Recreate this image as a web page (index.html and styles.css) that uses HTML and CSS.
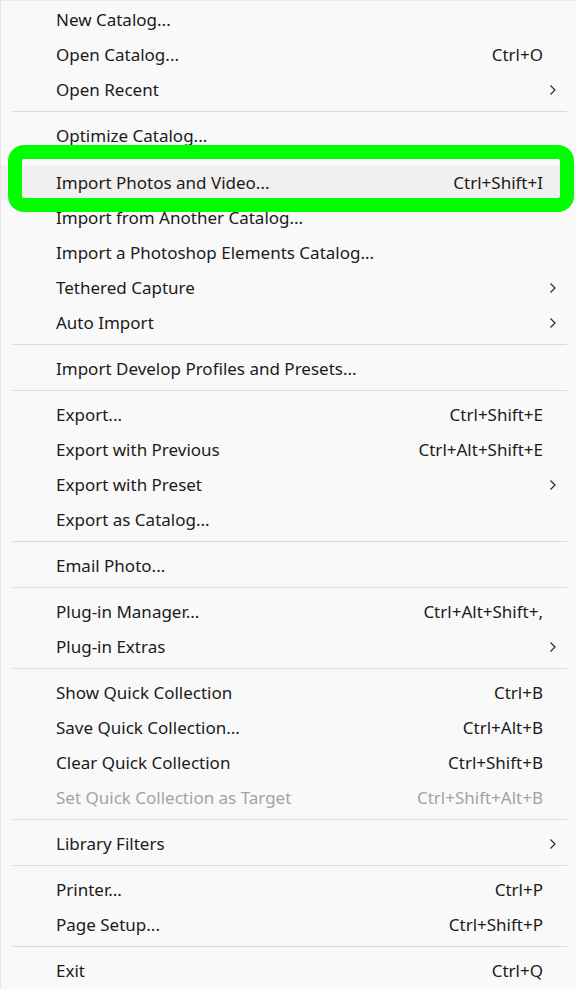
FILE: index.html
```html
<!DOCTYPE html>
<html>
<head>
<meta charset="utf-8">
<link rel="stylesheet" href="styles.css">
</head>
<body>
<div class="menu">
  <div class="item"><span class="label">New Catalog...</span></div>
  <div class="item"><span class="label">Open Catalog...</span><span class="key">Ctrl+O</span></div>
  <div class="item"><span class="label">Open Recent</span><span class="sub"><svg viewBox="0 0 8 12" width="8" height="12"><path d="M1.5 1.5 L6 6 L1.5 10.5" /></svg></span></div>
  <div class="sep"></div>
  <div class="item"><span class="label">Optimize Catalog...</span></div>
  <div class="item hot"><span class="label">Import Photos and Video...</span><span class="key">Ctrl+Shift+I</span></div>
  <div class="item"><span class="label">Import from Another Catalog...</span></div>
  <div class="item"><span class="label">Import a Photoshop Elements Catalog...</span></div>
  <div class="item"><span class="label">Tethered Capture</span><span class="sub"><svg viewBox="0 0 8 12" width="8" height="12"><path d="M1.5 1.5 L6 6 L1.5 10.5" /></svg></span></div>
  <div class="item"><span class="label">Auto Import</span><span class="sub"><svg viewBox="0 0 8 12" width="8" height="12"><path d="M1.5 1.5 L6 6 L1.5 10.5" /></svg></span></div>
  <div class="sep"></div>
  <div class="item"><span class="label">Import Develop Profiles and Presets...</span></div>
  <div class="sep"></div>
  <div class="item"><span class="label">Export...</span><span class="key">Ctrl+Shift+E</span></div>
  <div class="item"><span class="label">Export with Previous</span><span class="key">Ctrl+Alt+Shift+E</span></div>
  <div class="item"><span class="label">Export with Preset</span><span class="sub"><svg viewBox="0 0 8 12" width="8" height="12"><path d="M1.5 1.5 L6 6 L1.5 10.5" /></svg></span></div>
  <div class="item"><span class="label">Export as Catalog...</span></div>
  <div class="sep"></div>
  <div class="item"><span class="label">Email Photo...</span></div>
  <div class="sep"></div>
  <div class="item"><span class="label">Plug-in Manager...</span><span class="key">Ctrl+Alt+Shift+,</span></div>
  <div class="item"><span class="label">Plug-in Extras</span><span class="sub"><svg viewBox="0 0 8 12" width="8" height="12"><path d="M1.5 1.5 L6 6 L1.5 10.5" /></svg></span></div>
  <div class="sep"></div>
  <div class="item"><span class="label">Show Quick Collection</span><span class="key">Ctrl+B</span></div>
  <div class="item"><span class="label">Save Quick Collection...</span><span class="key">Ctrl+Alt+B</span></div>
  <div class="item"><span class="label">Clear Quick Collection</span><span class="key">Ctrl+Shift+B</span></div>
  <div class="item disabled"><span class="label">Set Quick Collection as Target</span><span class="key">Ctrl+Shift+Alt+B</span></div>
  <div class="sep"></div>
  <div class="item"><span class="label">Library Filters</span><span class="sub"><svg viewBox="0 0 8 12" width="8" height="12"><path d="M1.5 1.5 L6 6 L1.5 10.5" /></svg></span></div>
  <div class="sep"></div>
  <div class="item"><span class="label">Printer...</span><span class="key">Ctrl+P</span></div>
  <div class="item"><span class="label">Page Setup...</span><span class="key">Ctrl+Shift+P</span></div>
  <div class="sep"></div>
  <div class="item"><span class="label">Exit</span><span class="key">Ctrl+Q</span></div>
</div>
</body>
</html>
```
FILE: styles.css
```css
html, body {
  margin: 0;
  padding: 0;
  background: #f9f9f9;
}
.menu {
  width: 576px;
  height: 989px;
  box-sizing: border-box;
  padding-top: 1px;
  border-left: 1px solid #e6e6e6;
  border-top: 1px solid #ececec;
  background: #f9f9f9;
  font-family: "Noto Sans", "Open Sans", sans-serif;
  font-size: 17px;
  color: #1b1b1b;
  overflow: hidden;
}
.item {
  height: 35px;
  display: grid;
  grid-template-columns: 1fr auto 19px;
  align-items: center;
  padding: 0 14px 0 55px;
  position: relative;
}
.label {
  grid-column: 1;
  white-space: nowrap;
}
.key {
  grid-column: 2;
  white-space: nowrap;
}
.sub {
  grid-column: 3;
  display: flex;
  justify-content: center;
  align-items: center;
}
.sub svg path {
  fill: none;
  stroke: #2a2a2a;
  stroke-width: 1.2;
}
.sep {
  height: 1px;
  background: #dadada;
  margin: 4px 9px 6px 12px;
}
.disabled {
  color: #a3a3a3;
}
.hot {
  margin-top: 12px;
  background: #f0f0f0;
}
.hot::before {
  content: "";
  position: absolute;
  left: 7px;
  right: 2px;
  top: -20px;
  bottom: -12px;
  border: 14px solid #00ff00;
  border-radius: 16px;
  pointer-events: none;
}
```
